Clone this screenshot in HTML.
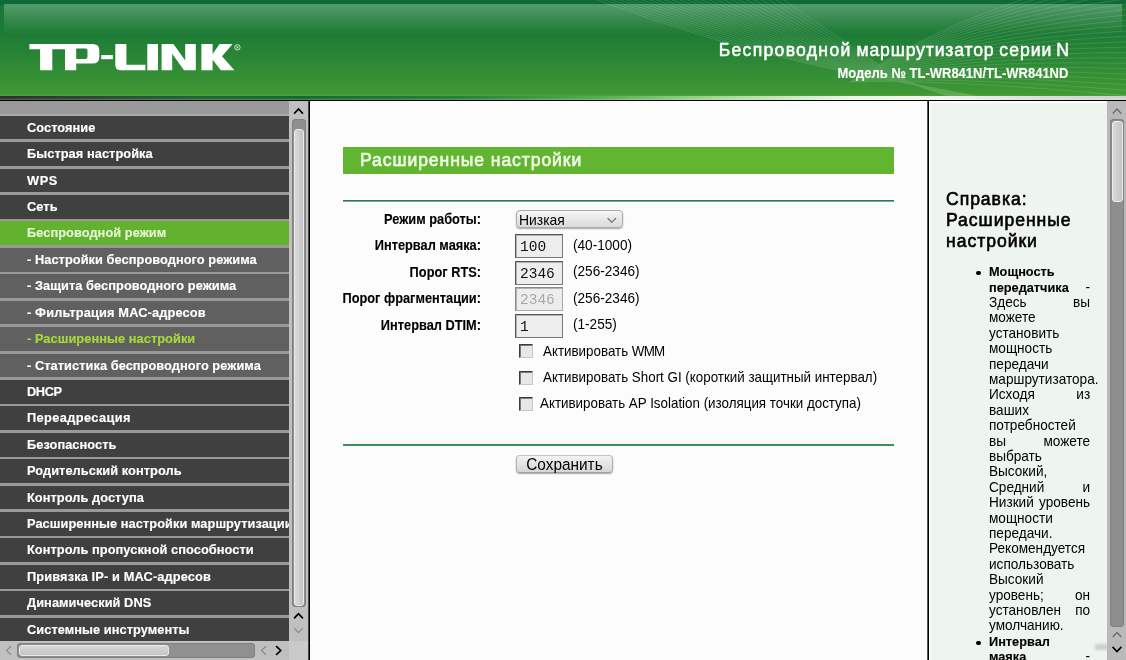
<!DOCTYPE html>
<html lang="ru">
<head>
<meta charset="utf-8">
<title>TL-WR841N</title>
<style>
html,body{margin:0;padding:0;}
body{width:1126px;height:660px;overflow:hidden;position:relative;background:#fff;font-family:"Liberation Sans",sans-serif;}
.abs{position:absolute;}
/* ---------- header ---------- */
#hdr{left:0;top:0;width:1126px;height:96px;background:linear-gradient(to bottom,#0c6b38 0px,#0c6b38 4px,#1a7836 6px,#1d7a35 30px,#1f7d36 38px,#2e8a35 65px,#3f9734 93px,#489e3a 95px,#489e3a 96px);overflow:hidden;}
#gloss{left:4px;top:4px;width:1118px;height:31px;background:linear-gradient(to bottom,rgba(255,255,255,.27) 0,rgba(255,255,255,.19) 8px,rgba(255,255,255,.05) 24px,rgba(255,255,255,0) 31px);}
#band{left:0;top:96px;width:1126px;height:4px;background:linear-gradient(to bottom,rgba(255,255,255,0) 0,rgba(255,255,255,0) 2px,rgba(255,255,255,.12) 3px,rgba(255,255,255,.25) 4px),linear-gradient(to right,#2f2f2f 0,#2d4534 90px,#1c6632 200px,#156b2f 300px,#23823a 460px,#56ad50 600px,#a5d895 720px,#eaf5e4 850px,#f3f7ef 940px,#dddddd 1040px,#d0d0d0 1126px);}
#hline{left:0;top:100px;width:1126px;height:1px;background:#000;}
#t1{right:56px;top:40px;color:#fff;font-size:17.6px;letter-spacing:1px;word-spacing:-1px;-webkit-text-stroke:.5px #fff;white-space:nowrap;line-height:20px;}
#t2{right:58px;top:64.6px;color:#fff;font-size:14.1px;font-weight:bold;white-space:nowrap;line-height:16px;transform:scaleX(.922);transform-origin:100% 50%;-webkit-text-stroke:.12px #fff;}
/* ---------- sidebar ---------- */
#side{left:0;top:101px;width:289px;height:540px;background:#999;overflow:hidden;}
.mi{position:absolute;left:0;width:289px;height:23.8px;background:#404040;color:#fff;font-weight:bold;font-size:13.3px;letter-spacing:.06px;line-height:23.6px;white-space:nowrap;overflow:hidden;}
.mi span{display:inline-block;margin-left:26.9px;transform:scaleX(.9625);transform-origin:0 50%;-webkit-text-stroke:.15px currentColor;}
.mi.sub{background:#606060;}
.mi.act{background:#62b22f;color:#e4f5d4;}
.mi.cur{color:#a6d93a;}

/* ---------- scrollbars ---------- */
.sb{background:#c0c0c0;}
.groove{background:#909090;border-radius:4px;box-shadow:inset 0 0 1px 1px #808080;}
.thumb{background:linear-gradient(to right,#d8d8d8,#c4c4c4);border:1px solid #ececec;border-radius:3px;box-sizing:border-box;}
.thumbh{background:linear-gradient(to bottom,#d8d8d8,#c4c4c4);border:1px solid #ececec;border-radius:3px;box-sizing:border-box;}
/* ---------- main ---------- */
#vline1{left:308px;top:101px;width:2px;height:559px;background:linear-gradient(to right,#4a4a4a 0,#4a4a4a 1px,#000 1px,#000 2px);}
#main{left:310px;top:101px;width:618px;height:559px;background:#fcfcfc;}
#tbar{left:343px;top:147px;width:551px;height:26.5px;background:#62b531;color:#f1fae3;-webkit-text-stroke:.6px #f1fae3;font-size:17.6px;letter-spacing:.9px;line-height:26px;text-indent:17px;white-space:nowrap;}
.gl{left:343px;width:551px;height:2px;background:#3f8d64;}
.lb{position:absolute;margin-top:-.5px;left:279.9px;width:201px;text-align:right;font-weight:bold;font-size:13.9px;line-height:16px;color:#000;white-space:nowrap;transform:scaleX(.921);transform-origin:100% 50%;-webkit-text-stroke:.12px #000;}
.inp{position:absolute;left:515px;width:48px;height:24px;box-sizing:border-box;border:1px solid #555;border-right-color:#777;border-bottom-color:#777;background:#ededed;box-shadow:inset 1px 1px 0 #b4b4b4;font-family:"Liberation Mono",monospace;font-size:14.5px;line-height:24.6px;text-indent:4px;color:#111;white-space:nowrap;}
.hint{position:absolute;left:573px;margin-top:-.4px;transform:scaleX(.938);transform-origin:0 50%;font-size:14.5px;line-height:16px;color:#000;white-space:nowrap;}
.cb{position:absolute;left:519px;width:14px;height:14px;box-sizing:border-box;border:1px solid;border-color:#3c3c3c #c6c6c6 #c6c6c6 #3c3c3c;background:#e7e7e7;box-shadow:inset 1px 1px 0 #7a7a7a;}
.cl{position:absolute;margin-top:-.4px;font-size:14.4px;line-height:16px;color:#000;white-space:nowrap;transform:scaleX(.929);transform-origin:0 50%;}
#sel{left:516px;top:210px;width:107px;height:18px;box-sizing:border-box;border:1px solid #acacac;border-radius:4px;background:linear-gradient(to bottom,#f6f6f6,#dadada);box-shadow:0 1px 1.5px rgba(0,0,0,.35);font-size:13.9px;line-height:18px;text-indent:2px;color:#000;}
#btn{left:516px;top:455px;width:97px;height:18px;box-sizing:border-box;border:1px solid;border-color:#c4c4c4 #b0b0b0 #a0a0a0 #b0b0b0;border-radius:4px;background:linear-gradient(to bottom,#f2f2f2,#d6d6d6);box-shadow:0 1px 1.5px rgba(0,0,0,.35);font-size:16.3px;line-height:16px;text-align:center;color:#000;}
#btn span{display:inline-block;transform:scaleX(.945);}
/* ---------- help ---------- */
#vline2{left:927px;top:101px;width:2px;height:559px;background:linear-gradient(to right,#555 0,#555 1px,#000 1px,#000 2px);}
#help{left:929px;top:101px;width:178px;height:559px;background:#eef5ef;overflow:hidden;}
#hh{left:946px;top:188.5px;-webkit-text-stroke:.6px #000;font-size:17.6px;letter-spacing:.95px;line-height:21.1px;color:#000;white-space:nowrap;}
.hl{position:absolute;left:988.8px;width:107.8px;transform:scaleX(.938);transform-origin:0 50%;margin-top:.9px;font-size:14.5px;line-height:15.4px;height:15.4px;color:#000;white-space:nowrap;text-align:justify;text-align-last:justify;}
.hl b{font-size:13.6px;-webkit-text-stroke:.12px #000;}
</style>
</head>
<body>
<div id="root" style="position:absolute;left:0;top:0;width:1126px;height:660px;will-change:transform;">
<div id="hdr" class="abs">
  <svg class="abs" style="left:0;top:0" width="1126" height="96" viewBox="0 0 1126 96"><g fill="none" stroke="#fff" stroke-width=".8" opacity=".15"><path d="M592.0,-2 Q735.0,52.0 868.0,76.0 T1000.0,102.0"/><path d="M599.6,-2 Q738.4,51.0 868.8,75.8 T1003.6,102.2"/><path d="M607.1,-2 Q741.8,49.9 869.6,75.5 T1007.2,102.5"/><path d="M614.7,-2 Q745.2,48.9 870.4,75.3 T1010.8,102.7"/><path d="M622.2,-2 Q748.6,47.8 871.2,75.0 T1014.4,103.0"/><path d="M629.8,-2 Q752.0,46.8 872.0,74.8 T1018.0,103.2"/><path d="M637.4,-2 Q755.4,45.8 872.8,74.6 T1021.6,103.4"/><path d="M644.9,-2 Q758.8,44.7 873.6,74.3 T1025.2,103.7"/><path d="M652.5,-2 Q762.2,43.7 874.4,74.1 T1028.8,103.9"/><path d="M660.0,-2 Q765.6,42.6 875.2,73.8 T1032.4,104.2"/><path d="M667.6,-2 Q769.0,41.6 876.0,73.6 T1036.0,104.4"/><path d="M675.2,-2 Q772.4,40.6 876.8,73.4 T1039.6,104.6"/><path d="M682.7,-2 Q775.8,39.5 877.6,73.1 T1043.2,104.9"/><path d="M690.3,-2 Q779.2,38.5 878.4,72.9 T1046.8,105.1"/><path d="M697.8,-2 Q782.6,37.4 879.2,72.6 T1050.4,105.4"/><path d="M705.4,-2 Q786.0,36.4 880.0,72.4 T1054.0,105.6"/><path d="M713.0,-2 Q789.4,35.4 880.8,72.2 T1057.6,105.8"/><path d="M720.5,-2 Q792.8,34.3 881.6,71.9 T1061.2,106.1"/><path d="M728.1,-2 Q796.2,33.3 882.4,71.7 T1064.8,106.3"/><path d="M735.6,-2 Q799.6,32.2 883.2,71.4 T1068.4,106.6"/><path d="M743.2,-2 Q803.0,31.2 884.0,71.2 T1072.0,106.8"/><path d="M750.8,-2 Q806.4,30.2 884.8,71.0 T1075.6,107.0"/><path d="M758.3,-2 Q809.8,29.1 885.6,70.7 T1079.2,107.3"/><path d="M765.9,-2 Q813.2,28.1 886.4,70.5 T1082.8,107.5"/><path d="M773.4,-2 Q816.6,27.0 887.2,70.2 T1086.4,107.8"/><path d="M781.0,-2 Q820.0,26.0 888.0,70.0 T1090.0,108.0"/><path d="M850.0,82.0 Q950.0,79.0 1130.0,96.0"/><path d="M850.6,81.7 Q950.9,75.8 1130.0,90.6"/><path d="M851.2,81.3 Q951.7,72.5 1130.0,85.1"/><path d="M851.8,81.0 Q952.6,69.3 1130.0,79.7"/><path d="M852.4,80.6 Q953.5,66.0 1130.0,74.3"/><path d="M853.0,80.3 Q954.3,62.8 1130.0,68.8"/><path d="M853.7,79.9 Q955.2,59.6 1130.0,63.4"/><path d="M854.3,79.6 Q956.1,56.3 1130.0,58.0"/><path d="M854.9,79.2 Q957.0,53.1 1130.0,52.5"/><path d="M855.5,78.9 Q957.8,49.8 1130.0,47.1"/><path d="M856.1,78.5 Q958.7,46.6 1130.0,41.7"/><path d="M856.7,78.2 Q959.6,43.4 1130.0,36.2"/><path d="M857.3,77.8 Q960.4,40.1 1130.0,30.8"/><path d="M857.9,77.5 Q961.3,36.9 1130.0,25.3"/><path d="M858.5,77.1 Q962.2,33.7 1130.0,19.9"/><path d="M859.1,76.8 Q963.0,30.4 1130.0,14.5"/><path d="M859.7,76.4 Q963.9,27.2 1130.0,9.0"/><path d="M860.3,76.1 Q964.8,23.9 1130.0,3.6"/><path d="M861.0,75.7 Q965.7,20.7 1130.0,-1.8"/><path d="M861.6,75.4 Q966.5,17.5 1130.0,-7.3"/><path d="M862.2,75.0 Q967.4,14.2 1130.0,-12.7"/><path d="M862.8,74.7 Q968.3,11.0 1130.0,-18.1"/><path d="M863.4,74.3 Q969.1,7.7 1130.0,-23.6"/><path d="M864.0,74.0 Q970.0,4.5 1130.0,-29.0"/></g></svg>
  <div id="gloss" class="abs"></div>
  <div id="t1" class="abs"><span style="letter-spacing:1.3px">Беспроводной</span> <span style="letter-spacing:.85px">маршрутизатор</span> серии<span style="margin-left:-1px"> N</span></div>
  <div id="t2" class="abs">Модель № TL-WR841N/TL-WR841ND</div>
</div>

<svg class="abs" style="left:0;top:0" width="260" height="96" viewBox="0 0 260 96">
  <g fill="#fff">
    <path d="M29.4,43.9 H92.5 Q99.3,43.9 99.3,50.2 V57.2 Q99.3,63.5 92.5,63.5 H76.2 V70.3 H65 V49.3 H52.3 V70.3 H40.1 V49.3 H29.4 Z M76.2,48.6 V58.9 H85.3 Q87.5,58.9 87.5,56.9 V50.6 Q87.5,48.6 85.3,48.6 Z" fill-rule="evenodd"/>
    <rect x="101.2" y="55.1" width="11.7" height="4.1"/>
    <path d="M115.3,44 H126.4 V64.7 H145.4 V70.3 H121 Q115.3,70.3 115.3,65 Z"/>
    <rect x="147.3" y="44" width="10.7" height="26.3"/>
    <path d="M161.6,44 H173.5 L185.2,60.5 V44 H195.8 V70.3 H184 L172.2,53.8 V70.3 H161.6 Z"/>
    <path d="M201.4,44 H212.6 V54 L219.6,44 H232.6 L222,56.2 L234.4,70.3 H220.8 L212.6,59.8 V70.3 H201.4 Z"/>
    <circle cx="237.4" cy="47.3" r="2.7" fill="none" stroke="#fff" stroke-width="0.9" opacity=".85"/>
    <rect x="236.6" y="46.2" width="1.6" height="2.2" opacity=".8"/>
  </g>
</svg>
<div id="band" class="abs"></div>
<div id="hline" class="abs"></div>

<div id="side" class="abs">
  <div class="abs" style="left:0;top:12.6px;width:289px;height:2px;background:#a9a9a9"></div>
  <div class="mi" style="top:14.7px"><span>Состояние</span></div>
  <div class="mi" style="top:41.1px"><span>Быстрая настройка</span></div>
  <div class="mi" style="top:67.5px;letter-spacing:.6px"><span>WPS</span></div>
  <div class="mi" style="top:93.9px"><span>Сеть</span></div>
  <div class="mi act" style="top:120.4px"><span>Беспроводной режим</span></div>
  <div class="mi sub" style="top:146.8px"><span>- Настройки беспроводного режима</span></div>
  <div class="mi sub" style="top:173.2px"><span>- Защита беспроводного режима</span></div>
  <div class="mi sub" style="top:199.6px;letter-spacing:.15px"><span>- Фильтрация МАС-адресов</span></div>
  <div class="mi sub cur" style="top:226.1px"><span>- Расширенные настройки</span></div>
  <div class="mi sub" style="top:252.5px"><span>- Статистика беспроводного режима</span></div>
  <div class="mi" style="top:278.9px;letter-spacing:-.4px"><span>DHCP</span></div>
  <div class="mi" style="top:305.3px;letter-spacing:.4px"><span>Переадресация</span></div>
  <div class="mi" style="top:331.8px"><span>Безопасность</span></div>
  <div class="mi" style="top:358.2px"><span>Родительский контроль</span></div>
  <div class="mi" style="top:384.6px"><span>Контроль доступа</span></div>
  <div class="mi" style="top:411.0px"><span>Расширенные настройки маршрутизации</span></div>
  <div class="mi" style="top:437.4px"><span>Контроль пропускной способности</span></div>
  <div class="mi" style="top:463.9px;letter-spacing:.13px"><span>Привязка IP- и МАС-адресов</span></div>
  <div class="mi" style="top:490.3px"><span>Динамический DNS</span></div>
  <div class="mi" style="top:516.7px"><span>Системные инструменты</span></div>
</div>

<!-- sidebar scrollbars -->
<div class="abs sb" style="left:289px;top:101px;width:19px;height:540px"></div>
<div class="abs groove" style="left:292px;top:119px;width:14px;height:488px"></div>
<div class="abs thumb" style="left:294px;top:129px;width:9.5px;height:477px"></div>
<div class="abs sb" style="left:0;top:641px;width:289px;height:19px"></div>
<div class="abs" style="left:289px;top:641px;width:19px;height:19px;background:#cacaca"></div>
<div class="abs groove" style="left:17px;top:643px;width:238px;height:15px"></div>
<div class="abs thumbh" style="left:19px;top:645px;width:150px;height:11px"></div>


<!-- main -->
<div id="vline1" class="abs"></div>
<div id="main" class="abs"></div>
<div id="tbar" class="abs">Расширенные настройки</div>
<div class="abs gl" style="top:200px;background:linear-gradient(to bottom,#2f7850 0,#2f7850 1px,#74ad92 1px,#74ad92 2px)"></div>
<div class="lb" style="top:211.5px">Режим работы:</div>
<div class="lb" style="top:237.9px">Интервал маяка:</div>
<div class="lb" style="top:264.3px">Порог RTS:</div>
<div class="lb" style="top:290.7px">Порог фрагментации:</div>
<div class="lb" style="top:317.1px">Интервал DTIM:</div>
<div id="sel" class="abs">Низкая</div>
<div class="inp" style="top:234px">100</div>
<div class="inp" style="top:261px">2346</div>
<div class="inp" style="top:287px;color:#a8a8a8;border-color:#888;border-right-color:#aaa;border-bottom-color:#aaa">2346</div>
<div class="inp" style="top:314px">1</div>
<div class="hint" style="top:237.4px">(40-1000)</div>
<div class="hint" style="top:263.8px">(256-2346)</div>
<div class="hint" style="top:290.2px">(256-2346)</div>
<div class="hint" style="top:316.6px">(1-255)</div>
<div class="cb" style="top:344px"></div>
<div class="cb" style="top:371px"></div>
<div class="cb" style="top:397px"></div>
<div class="cl" style="left:543.3px;top:343px">Активировать <span style="letter-spacing:-.9px">WMM</span></div>
<div class="cl" style="left:543.3px;top:369.4px">Активировать Short GI (короткий защитный интервал)</div>
<div class="cl" style="left:539.8px;top:395.8px">Активировать AP Isolation (изоляция точки доступа)</div>
<div class="abs gl" style="top:444px"></div>
<div id="btn" class="abs"><span>Сохранить</span></div>

<!-- help -->
<div id="vline2" class="abs"></div>
<div id="help" class="abs"><div class="abs" style="left:0;top:0;width:178px;height:2px;background:#fff"></div><div class="abs" style="left:0;top:0;width:2px;height:559px;background:linear-gradient(to right,#fff,#f6faf6)"></div></div>
<div id="hh" class="abs">Справка:<br>Расширенные<br>настройки</div>
<div class="abs" style="left:976.3px;top:270.5px;width:4.6px;height:4.6px;border-radius:50%;background:#000"></div>
<div class="abs" style="left:976.3px;top:640.5px;width:4.6px;height:4.6px;border-radius:50%;background:#000"></div>
<div class="hl" style="top:263.3px"><b>Мощность</b></div>
<div class="hl" style="top:278.7px"><b>передатчика</b> -</div>
<div class="hl" style="top:294.1px">Здесь вы</div>
<div class="hl" style="top:309.5px">можете</div>
<div class="hl" style="top:324.9px">установить</div>
<div class="hl" style="top:340.3px">мощность</div>
<div class="hl" style="top:355.7px">передачи</div>
<div class="hl" style="top:371.1px">маршрутизатора.</div>
<div class="hl" style="top:386.5px">Исходя из</div>
<div class="hl" style="top:401.9px">ваших</div>
<div class="hl" style="top:417.3px">потребностей</div>
<div class="hl" style="top:432.7px">вы можете</div>
<div class="hl" style="top:448.1px">выбрать</div>
<div class="hl" style="top:463.5px">Высокий,</div>
<div class="hl" style="top:478.9px">Средний и</div>
<div class="hl" style="top:494.3px">Низкий уровень</div>
<div class="hl" style="top:509.7px">мощности</div>
<div class="hl" style="top:525.1px">передачи.</div>
<div class="hl" style="top:540.5px">Рекомендуется</div>
<div class="hl" style="top:555.9px">использовать</div>
<div class="hl" style="top:571.3px">Высокий</div>
<div class="hl" style="top:586.7px">уровень; он</div>
<div class="hl" style="top:602.1px">установлен по</div>
<div class="hl" style="top:617.5px">умолчанию.</div>
<div class="hl" style="top:632.9px"><b>Интервал</b></div>
<div class="hl" style="top:648.3px"><b>маяка</b> -</div>

<div class="abs" style="left:1095px;top:644px;width:14px;height:6px;background:rgba(110,110,110,.28);filter:blur(1.6px)"></div>
<!-- help scrollbar -->
<div class="abs" style="left:1107px;top:101px;width:19px;height:559px;background:#b9b9b9"></div>
<div class="abs groove" style="left:1110px;top:119px;width:14px;height:508px;background:#8e8e8e"></div>
<div class="abs thumb" style="left:1112px;top:121px;width:10.5px;height:80.5px"></div>
<svg class="abs" style="left:0;top:0;pointer-events:none" width="1126" height="660" viewBox="0 0 1126 660">
  <path d="M294.7,113.0 L298.5,109.0 L302.3,113.0" fill="none" stroke="#000" stroke-width="1.7" stroke-linecap="square"/>
  <path d="M294.7,617.7 L298.5,613.7 L302.3,617.7" fill="none" stroke="#000" stroke-width="1.7" stroke-linecap="square"/>
  <path d="M294.7,628.7 L298.5,632.7 L302.3,628.7" fill="none" stroke="#8c8c8c" stroke-width="1.2" stroke-linecap="square"/>
  <path d="M10.5,646.7 L6.5,650.5 L10.5,654.3" fill="none" stroke="#8c8c8c" stroke-width="1.2" stroke-linecap="square"/>
  <path d="M265.5,646.7 L261.5,650.5 L265.5,654.3" fill="none" stroke="#8c8c8c" stroke-width="1.2" stroke-linecap="square"/>
  <path d="M276.7,646.7 L280.7,650.5 L276.7,654.3" fill="none" stroke="#000" stroke-width="1.7" stroke-linecap="square"/>
  <path d="M1113.2,113.0 L1117,109.0 L1120.8,113.0" fill="none" stroke="#6a6a6a" stroke-width="1.3" stroke-linecap="square"/>
  <path d="M1113.2,636.5 L1117,632.5 L1120.8,636.5" fill="none" stroke="#6a6a6a" stroke-width="1.3" stroke-linecap="square"/>
  <path d="M1113.2,647.5 L1117,651.5 L1120.8,647.5" fill="none" stroke="#000" stroke-width="1.7" stroke-linecap="square"/>
  <path d="M607.6,218 L611.8,222.4 L616,218" fill="none" stroke="#777" stroke-width="1.3"/>
</svg>
</div>
</body>
</html>
